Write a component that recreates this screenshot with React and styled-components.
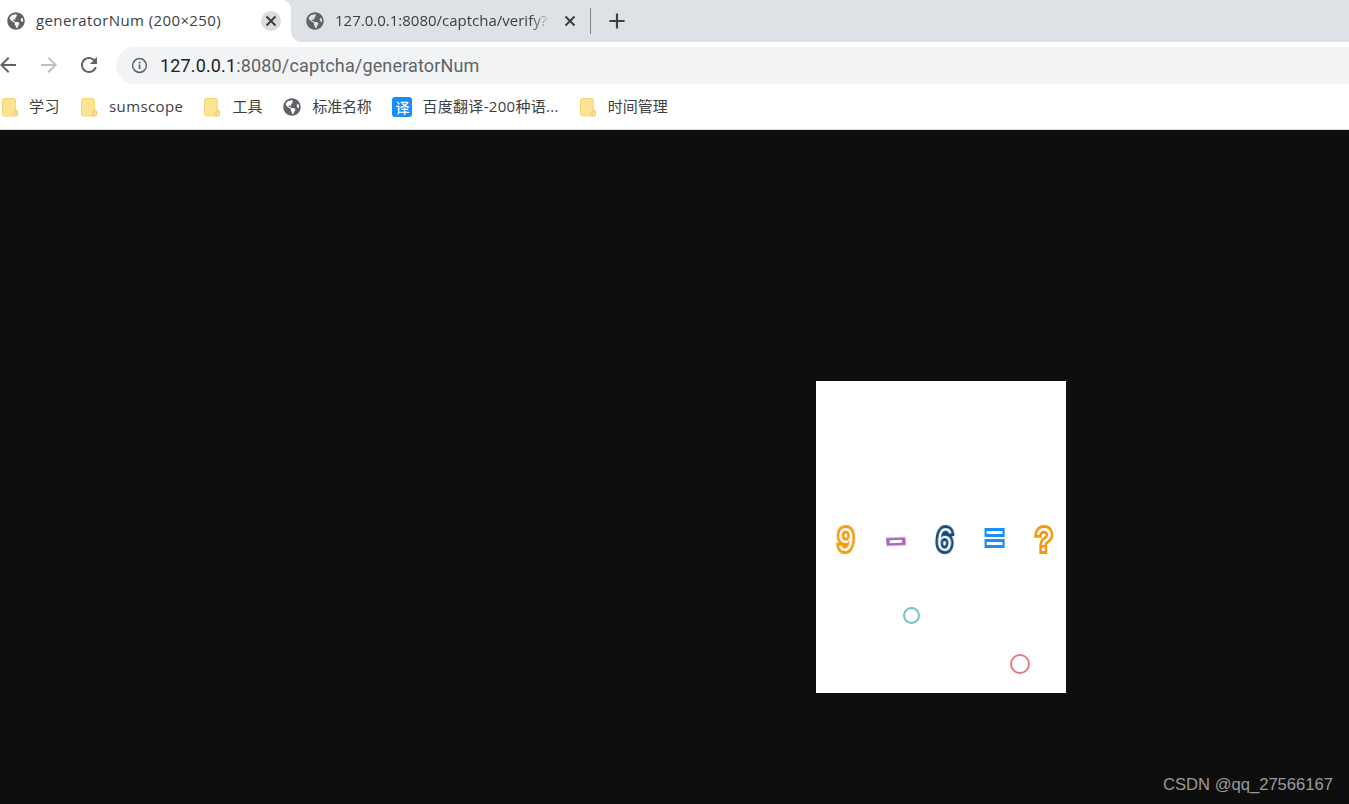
import React from "react";
import styled, { createGlobalStyle } from "styled-components";
import { FaGlobeAmericas } from "react-icons/fa";

const Global = createGlobalStyle`
  html, body { margin: 0; padding: 0; height: 804px; overflow: hidden; background: #0e0e0e; }
  * { box-sizing: border-box; }
  body { font-family: "Open Sans", "Noto Sans CJK SC", sans-serif; }
`;

const Page = styled.div`
  width: 1349px;
  height: 804px;
  display: flex;
  flex-direction: column;
  position: relative;
  overflow: hidden;
`;

const TabStrip = styled.div`
  height: 42px;
  display: flex;
  align-items: stretch;
  background: #dee1e6;
  flex: none;
`;

const ActiveTab = styled.div`
  position: relative;
  width: 291px;
  background: #fff;
  border-top-right-radius: 9px;
  display: flex;
  align-items: center;
  padding-left: 7px;
  &::after {
    content: "";
    position: absolute;
    right: -10px;
    bottom: 0;
    width: 10px;
    height: 10px;
    background: radial-gradient(circle at 100% 0, #dee1e6 9.5px, #fff 10px);
  }
`;

const InactiveTab = styled.div`
  flex: 1;
  padding-left: 15px;
  display: flex;
  align-items: center;
`;

const TabTitle = styled.span`
  font-family: "Open Sans", sans-serif;
  font-size: 15px;
  line-height: 20px;
  padding-bottom: 2px;
  letter-spacing: ${(p) => p.$spacing || "0.4px"};
  color: #3c4043;
  margin-left: 11px;
  width: ${(p) => p.$width};
  flex: none;
  white-space: nowrap;
  ${(p) =>
    p.$fade &&
    `-webkit-mask-image: linear-gradient(to right, #000 90%, transparent 100%);
     mask-image: linear-gradient(to right, #000 90%, transparent 100%);`}
`;

const CloseButton = styled.span`
  width: 20px;
  height: 20px;
  border-radius: 50%;
  background: ${(p) => (p.$hover ? "#dadce0" : "transparent")};
  display: flex;
  align-items: center;
  justify-content: center;
  margin-left: ${(p) => p.$offset};
  flex: none;
`;

const TabDivider = styled.span`
  width: 1px;
  height: 26px;
  background: #80868b;
  margin-left: 10px;
  flex: none;
`;

const NewTab = styled.span`
  margin-left: 13px;
  display: flex;
`;

const Toolbar = styled.div`
  height: 46px;
  background: #fff;
  display: flex;
  align-items: center;
  flex: none;
`;

const NavIcons = styled.div`
  width: 116px;
  display: flex;
  align-items: center;
  gap: 16.500px;
  margin-left: -4px;
  margin-right: 4px;
  flex: none;
`;

const Omnibox = styled.div`
  flex: 1;
  height: 37px;
  margin-top: 1px;
  margin-right: -40px;
  background: #f1f3f4;
  border-radius: 19px;
  display: flex;
  align-items: center;
  padding-left: 15px;
`;

const UrlText = styled.span`
  font-family: "Roboto", sans-serif;
  font-size: 18px;
  letter-spacing: 0.15px;
  margin-left: 12px;
  color: #5f6368;
  white-space: nowrap;
  b {
    font-weight: 400;
    color: #202124;
  }
`;

const BookmarkBar = styled.div`
  height: 42px;
  background: #fff;
  border-bottom: 1px solid #dadce0;
  display: flex;
  align-items: center;
  gap: 21px;
  padding: 0 0 3px 2px;
  flex: none;
`;

const Bookmark = styled.div`
  display: flex;
  align-items: center;
  gap: ${(p) => p.$gap || "12px"};
`;

const BookmarkLabel = styled.span`
  font-family: "Open Sans", "Noto Sans CJK SC", sans-serif;
  font-size: 15px;
  line-height: 20px;
  padding-bottom: 2px;
  color: #3c4043;
  letter-spacing: ${(p) => p.$spacing || "0"};
  white-space: nowrap;
`;

const TranslateBadge = styled.span`
  width: 20px;
  height: 20px;
  border-radius: 3px;
  background: #1a8cff;
  color: #fff;
  font-family: "Noto Sans CJK SC", sans-serif;
  font-size: 14px;
  font-weight: 500;
  display: flex;
  align-items: center;
  justify-content: center;
`;

const Viewer = styled.main`
  flex: 1;
  background: #0e0e0e;
  padding: 251px 0 0 816px;
`;

const Captcha = styled.div`
  position: relative;
  width: 250px;
  height: 312px;
  background: #fff;
  padding: 140px 0 0 5px;
  display: grid;
  grid-template-columns: repeat(5, 49.6px);
  align-content: start;
`;

const Glyph = styled.span`
  height: 36px;
  display: flex;
  align-items: center;
  justify-content: center;
  font-family: "Liberation Sans", sans-serif;
  font-weight: 400;
  font-size: ${(p) => p.$size};
  line-height: 1;
  color: #fff;
  -webkit-text-stroke: ${(p) => p.$stroke || "6px"} ${(p) => p.$color};
  paint-order: stroke;
  stroke-linejoin: round;
  filter: blur(0.4px);
  transform: ${(p) => p.$transform || "none"};
`;

const Marker = styled.span`
  position: absolute;
  left: ${(p) => p.$x}px;
  top: ${(p) => p.$y}px;
  width: ${(p) => p.$d}px;
  height: ${(p) => p.$d}px;
  border: 2px solid ${(p) => p.$color};
  border-radius: 50%;
`;

const Watermark = styled.span`
  position: absolute;
  right: 16px;
  bottom: 9px;
  font-family: "Liberation Sans", sans-serif;
  font-size: 16.600px;
  line-height: 20px;
  color: #9b9b9b;
`;

const Globe = styled(FaGlobeAmericas)`
  color: #5f6368;
  flex: none;
`;

const Path = ({ d, color, size = 24 }) => (
  <svg width={size} height={size} viewBox="0 0 24 24" fill={color} style={{ flex: "none" }}>
    <path d={d} />
  </svg>
);

const Folder = () => (
  <svg width="16" height="19" viewBox="0 0 16 19" style={{ flex: "none" }}>
    <path d="M2.500.500h9a2 2 0 0 1 2 2V16a2 2 0 0 1-2 2h-9a2 2 0 0 1-2-2V2.500a2 2 0 0 1 2-2z" fill="#fde293" stroke="#f8d56f" />
    <rect x="12" y="12.500" width="3.500" height="5.500" rx="1.500" fill="#fde293" stroke="#f4c542" />
  </svg>
);

const Cross = () => (
  <svg width="12" height="12" viewBox="0 0 12 12">
    <path d="M1.500 1.500l9 9M10.500 1.500l-9 9" stroke="#3c4043" strokeWidth="2" />
  </svg>
);

const Info = () => (
  <svg width="17" height="17" viewBox="0 0 17 17" style={{ flex: "none" }}>
    <circle cx="8.500" cy="8.500" r="6.900" fill="none" stroke="#5f6368" strokeWidth="1.500" />
    <rect x="7.700" y="7.500" width="1.700" height="4.500" fill="#5f6368" />
    <rect x="7.700" y="4.800" width="1.700" height="1.700" fill="#5f6368" />
  </svg>
);

export default function App() {
  return (
    <Page>
      <Global />
      <TabStrip>
        <ActiveTab>
          <Globe size={18} />
          <TabTitle $width="214px">generatorNum (200×250)</TabTitle>
          <CloseButton $hover $offset="11px"><Cross /></CloseButton>
        </ActiveTab>
        <InactiveTab>
          <Globe size={18} />
          <TabTitle $width="217px" $spacing="0px" $fade>127.0.0.1:8080/captcha/verify?</TabTitle>
          <CloseButton $offset="8px"><Cross /></CloseButton>
          <TabDivider />
          <NewTab>
            <Path color="#3c4043" size={26} d="M13 5h-2v6H5v2h6v6h2v-6h6v-2h-6z" />
          </NewTab>
        </InactiveTab>
      </TabStrip>

      <Toolbar>
        <NavIcons>
          <Path color="#5f6368" d="M20 11H7.830l5.590-5.590L12 4l-8 8 8 8 1.410-1.410L7.830 13H20v-2z" />
          <Path color="#bdc1c6" d="M12 4l-1.410 1.410L16.170 11H4v2h12.170l-5.580 5.590L12 20l8-8z" />
          <Path color="#5f6368" d="M17.650 6.350C16.200 4.900 14.210 4 12 4c-4.420 0-7.990 3.580-7.990 8s3.570 8 7.990 8c3.730 0 6.840-2.550 7.730-6h-2.080c-.82 2.330-3.040 4-5.650 4-3.310 0-6-2.690-6-6s2.690-6 6-6c1.660 0 3.140.69 4.220 1.780L13 11h7V4l-2.350 2.350z" />
        </NavIcons>
        <Omnibox>
          <Info />
          <UrlText><b>127.0.0.1</b>:8080/captcha/generatorNum</UrlText>
        </Omnibox>
      </Toolbar>

      <BookmarkBar>
        <Bookmark $gap="11px">
          <Folder />
          <BookmarkLabel $spacing="0.5px">学习</BookmarkLabel>
        </Bookmark>
        <Bookmark>
          <Folder />
          <BookmarkLabel $spacing="0.4px">sumscope</BookmarkLabel>
        </Bookmark>
        <Bookmark>
          <Folder />
          <BookmarkLabel>工具</BookmarkLabel>
        </Bookmark>
        <Bookmark $gap="11px">
          <Globe size={18} />
          <BookmarkLabel $spacing="-0.25px">标准名称</BookmarkLabel>
        </Bookmark>
        <Bookmark $gap="10px">
          <TranslateBadge>译</TranslateBadge>
          <BookmarkLabel $spacing="0.3px">百度翻译-200种语...</BookmarkLabel>
        </Bookmark>
        <Bookmark>
          <Folder />
          <BookmarkLabel>时间管理</BookmarkLabel>
        </Bookmark>
      </BookmarkBar>

      <Viewer>
        <Captcha>
          <Glyph $size="34px" $color="#f59a0e" $transform="scaleX(0.85) rotate(4deg)">9</Glyph>
          <Glyph $size="36px" $color="#a76cb4" $stroke="5px" $transform="scaleX(1.4) rotate(-3deg)">-</Glyph>
          <Glyph $size="34px" $color="#134a7c" $transform="scaleX(0.85) rotate(6deg)">6</Glyph>
          <Glyph $size="32px" $color="#1a8dff" $stroke="4.500px" $transform="translateY(-1px) scaleY(1.3)">=</Glyph>
          <Glyph $size="34px" $color="#f59a0e" $transform="scaleX(0.85)">?</Glyph>
          <Marker $x={87} $y={226} $d={17} $color="#7cc0c0" />
          <Marker $x={194} $y={273} $d={20} $color="#e67c80" />
        </Captcha>
      </Viewer>
      <Watermark>CSDN @qq_27566167</Watermark>
    </Page>
  );
}
